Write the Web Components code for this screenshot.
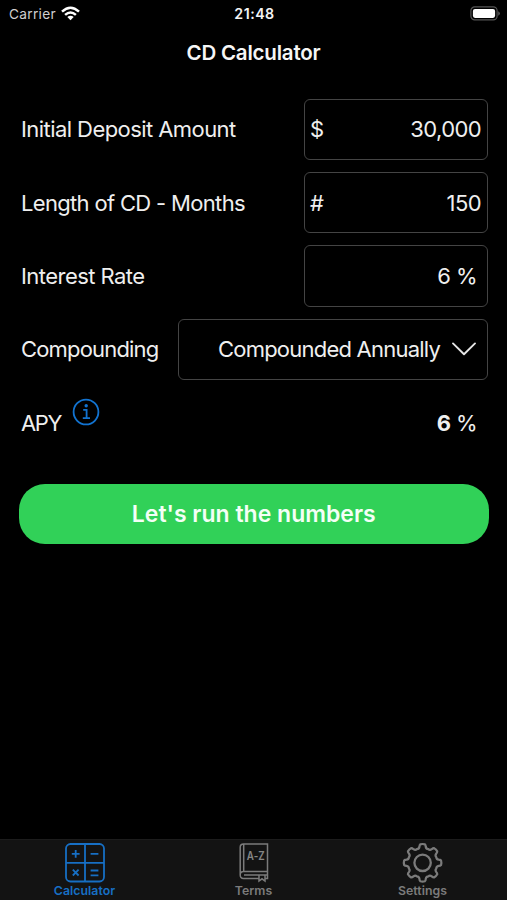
<!DOCTYPE html>
<html lang="en"><head><meta charset="utf-8"><title>CD Calculator</title>
<style>
html,body{margin:0;background:#000}
body{width:507px;height:900px;overflow:hidden;font-family:Inter,"Liberation Sans",sans-serif;color:#efefef}
</style></head><body>
<cd-app></cd-app>
<script>
const define=(name,html,setup)=>customElements.define(name,class extends HTMLElement{
  connectedCallback(){
    if(this.shadowRoot)return;
    this.attachShadow({mode:'open'}).innerHTML=html;
    if(setup)setup(this,this.shadowRoot);
  }
});

define('status-bar',`<style>
:host{display:grid;grid-template-columns:1fr auto 1fr;align-items:center;height:27px;padding:0 7px 0 9px;font-size:13.7px;box-sizing:border-box}
.l{display:flex;align-items:center;gap:5px;color:#cfcfcf;letter-spacing:.3px}
.t{font-size:14.2px;font-weight:600;color:#f4f4f4;letter-spacing:.5px}
.b{justify-self:end;display:flex}
svg{display:block}
</style>
<div class="l"><span>Carrier</span><svg width="19" height="15" viewBox="0 0 19 15"><g fill="none" stroke="#fff" stroke-width="2.5"><path d="M1 5.7Q9.5-2.2 18 5.7"/><path d="M4.1 8.9Q9.5 4 14.9 8.9"/></g><path d="M6.3 11.1Q9.5 8.3 12.7 11.1L9.5 14.3Z" fill="#fff"/></svg></div>
<div class="t">21:48</div>
<div class="b"><svg width="30" height="15" viewBox="0 0 30 15"><rect x=".9" y=".9" width="26.2" height="13" rx="3.8" fill="none" stroke="#555" stroke-width="1.2"/><rect x="2.9" y="2.9" width="22.2" height="9" rx="2.1" fill="#fff"/><path d="M28.3 5.2Q29.8 6 29.8 7.5T28.3 9.8Z" fill="#666"/></svg></div>`);

define('nav-title',`<style>
:host{display:flex;align-items:center;justify-content:center;height:50px;font-size:20.5px;font-weight:600;color:#f6f6f6;letter-spacing:-.2px}
</style><slot></slot>`);

define('form-row',`<style>
:host{display:flex;align-items:center;justify-content:space-between;height:61.4px;margin-bottom:12px;padding:0 19px 0 21px;font-size:22px}
.l{display:flex;align-items:center;letter-spacing:var(--ls,0);white-space:nowrap}
</style><div class="l"><slot name="label"></slot></div><slot></slot>`);

define('value-box',`<style>
:host{display:flex;align-items:center;justify-content:space-between;box-sizing:border-box;width:184px;height:61.4px;padding:0 6px 0 5px;border:1.5px solid #444;border-radius:6px;white-space:nowrap;letter-spacing:var(--vs,-.6px)}
:host([wide]){width:310px;padding:0 10px 0 40px}
:host([plain]){border-color:transparent}
</style><slot name="prefix"><span></span></slot><slot></slot>`);

define('info-icon',`<style>:host{display:block;margin:-21px 0 0 11.5px}svg{display:block}</style>
<svg width="28" height="28" viewBox="0 0 28 28" fill="none" stroke="#1273d0" stroke-width="1.8"><circle cx="14" cy="14" r="12.4"/><path d="M11.2 11.8H14.6V20M10.8 20.2H18" stroke-width="1.8"/><circle cx="14.2" cy="7.8" r="1.7" fill="#1273d0" stroke="none"/></svg>`);

define('chevron-icon',`<style>:host{display:block}svg{display:block}</style>
<svg width="26" height="16" viewBox="0 0 26 16" fill="none" stroke="#e6e6e6" stroke-width="1.9" stroke-linecap="round" stroke-linejoin="round"><path d="M2 2.4L13 13.2L24 2.4"/></svg>`);

define('run-button',`<style>
:host{display:flex;align-items:center;justify-content:center;height:60.5px;margin:30px 18.5px 0 19px;border-radius:26px;background:#31d158;color:#f4fff6;font-size:23px;font-weight:600}
</style><slot></slot>`);

// Outline of an eight-tooth cog, centred on the origin.
function cogPath(){
  const p=(r,a)=>{const t=a*Math.PI/180;return (r*Math.cos(t)).toFixed(2)+' '+(r*Math.sin(t)).toFixed(2)};
  let d='M'+p(18.6,-7);
  for(let k=0;k<8;k++){
    const a=k*45;
    d+='Q'+p(19.1,a)+' '+p(18.6,a+7)+'Q'+p(18,a+10)+' '+p(16.4,a+11)+'Q'+p(14.2,a+14.5)+' '+p(14.8,a+22.5)
      +'Q'+p(14.2,a+30.5)+' '+p(16.4,a+34)+'Q'+p(18,a+35)+' '+p(18.6,a+38);
  }
  return d+'Z';
}
const icons={
calculator:`<rect x="2" y="2" width="38" height="37.5" rx="4.5"/><path d="M21 2V39.5M2 20.8H40"/><path d="M7.8 11.8H15.6M11.7 7.9V15.7M26.6 11.8H34.4M8.8 27.7L14.6 33.5M14.6 27.7L8.8 33.5M26.6 28.5H34.4M26.6 33.3H34.4"/>`,
terms:`<g stroke-width="1.5"><path d="M10.5 2H34.5V29.6H10.5Q7.2 29.6 7.2 33T10.5 36.4H26M32 36.4H34.5V29.6M7.2 33V5.3Q7.2 2 10.5 2M10.7 2.5V29"/><path d="M11 33H34.5"/><path d="M26 33V39L29 36.8L32 39V33"/></g><text x="22.8" y="17.8" text-anchor="middle" font-size="11.5" font-weight="600" fill="#858585" stroke="none" textLength="18" lengthAdjust="spacingAndGlyphs">A-Z</text>`,
settings:`<g transform="translate(20.6 20.8)" stroke-width="2.2"><path d="${cogPath()}"/><circle r="8.2" stroke-width="2.3"/></g>`
};
define('tab-item',`<style>
:host{display:flex;flex-direction:column;align-items:center;flex:1;padding-top:2px;color:#7b7b7b;font-size:12.3px;font-weight:600;letter-spacing:.05px}
:host([active]){color:#176fc4}
svg{display:block}
.c{line-height:14px}
</style><svg width="42" height="42" viewBox="0 0 42 42" fill="none" stroke="currentColor" stroke-width="1.8"></svg><div class="c"><slot></slot></div>`,
(h,r)=>{r.querySelector('svg').innerHTML=icons[h.getAttribute('icon')]});

define('tab-bar',`<style>:host{display:flex;box-sizing:border-box;height:61px;background:#131313;border-top:1px solid #1c1c1c}</style><slot></slot>`);

define('cd-app',`<style>
:host{display:flex;flex-direction:column;width:507px;height:900px;background:#000}
main{flex:1;padding-top:21.6px}
b{font-weight:700}
#r1{--ls:-.57px}#r2{--ls:-.67px}#r3{--ls:-.55px}#r4{--ls:-.82px;--vs:-.78px}#r5{--ls:-1.4px}
chevron-icon{margin-left:6px}
</style>
<status-bar></status-bar>
<nav-title>CD Calculator</nav-title>
<main>
<form-row id="r1"><span slot="label">Initial Deposit Amount</span><value-box><span slot="prefix">$</span><span>30,000</span></value-box></form-row>
<form-row id="r2"><span slot="label">Length of CD - Months</span><value-box><span slot="prefix">#</span><span>150</span></value-box></form-row>
<form-row id="r3"><span slot="label">Interest Rate</span><value-box style="padding-right:10px"><span>6 %</span></value-box></form-row>
<form-row id="r4"><span slot="label">Compounding</span><value-box wide style="padding-left:34px"><span>Compounded Annually</span><chevron-icon></chevron-icon></value-box></form-row>
<form-row id="r5"><span slot="label">APY</span><info-icon slot="label"></info-icon><value-box plain style="padding-right:10px"><span><b>6</b> %</span></value-box></form-row>
<run-button>Let's run the numbers</run-button>
</main>
<tab-bar><tab-item icon="calculator" active>Calculator</tab-item><tab-item icon="terms">Terms</tab-item><tab-item icon="settings">Settings</tab-item></tab-bar>`);
</script></body></html>
